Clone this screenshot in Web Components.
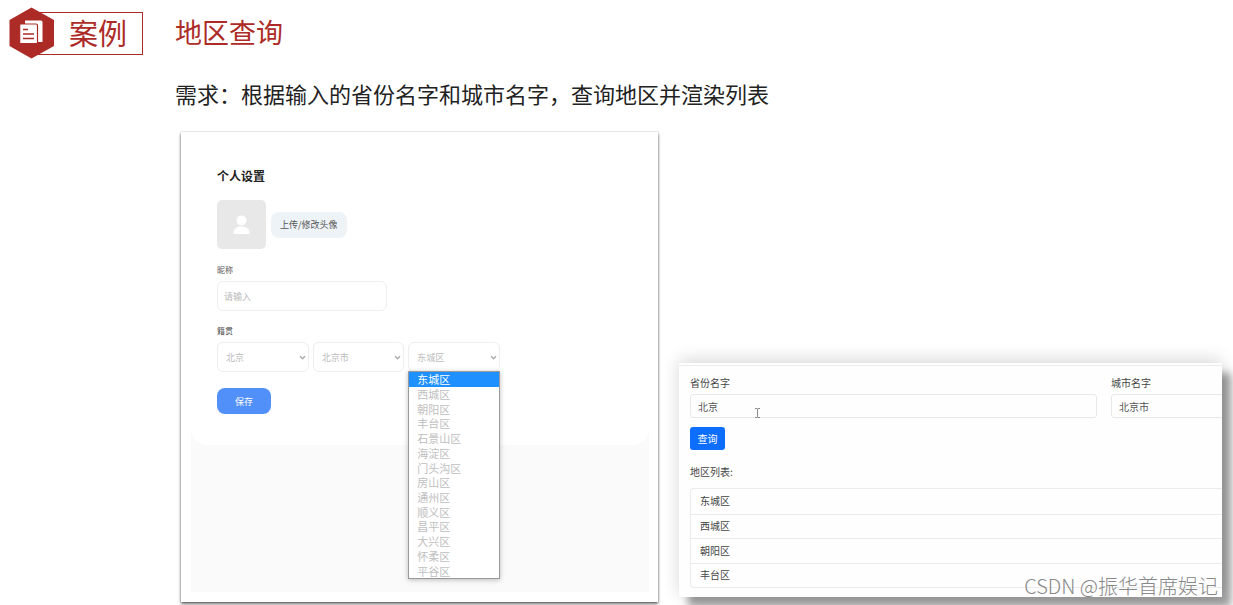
<!DOCTYPE html>
<html lang="zh-CN">
<head>
<meta charset="utf-8">
<title>案例 地区查询</title>
<style>
body{margin:0;background:#fff;color:#222;font-family:"Noto Sans CJK SC",sans-serif}
</style>
</head>
<body>
<case-page></case-page>
<script>
const define=(name,html,setup)=>customElements.define(name,class extends HTMLElement{
  connectedCallback(){
    if(this.shadowRoot)return;
    const t=document.createElement('template');
    t.innerHTML=html;
    this.attachShadow({mode:'open'}).append(t.content.cloneNode(true));
    if(setup)setup(this,this.shadowRoot);
  }
});

define('case-badge',`<style>
:host{display:flex;align-items:center;height:52px}
svg{display:block;width:46px;height:52px;position:relative;flex:none}
span{box-sizing:border-box;flex:1;height:43px;margin-left:-24px;padding-left:37px;border:1px solid #ad2b26;color:#ad2b26;font-size:29px;line-height:39px;white-space:nowrap}
</style>
<svg viewBox="0 0 46 52" aria-hidden="true"><path d="M22.500.500 45 13v26L22.500 51.500.500 39V13z" fill="#ad2b26"/><path d="M16 13.500h16q1.500 0 1.500 1.500v20h-17z" fill="#fff"/><path d="M11.500 17h15.500q1.500 0 1.500 1.500V36.500h-17q-.8 0-.8-.8V17.800q0-.8.8-.8z" fill="#fff" stroke="#ad2b26" stroke-width="1.200"/><path d="M14 22.500h5M14 27h11M14 31.500h11" stroke="#ad2b26" stroke-width="1.300"/></svg>
<span><slot></slot></span>`);

define('page-header',`<style>
:host{display:grid;grid-template-columns:134px 1fr;column-gap:32px;padding:7px 9px 0}
h1{margin:0;color:#ad2b26;font-size:27px;line-height:50px;font-weight:400}
p{grid-column:2;margin:0;padding-top:17px;font-size:22px;line-height:34px}
</style>
<case-badge>案例</case-badge><h1><slot name="title"></slot></h1><p><slot></slot></p>`);

define('text-field',`<style>
:host{display:block;position:relative}
label{display:block;font-size:8px;line-height:12px;color:#555;margin-bottom:5px}
input{display:block;box-sizing:border-box;width:100%;height:30px;padding:0 6px;border:1px solid #eee;border-radius:6px;background:#fff;color:#555;font:9px "Noto Sans CJK SC",sans-serif;outline:0}
input::placeholder{color:#bbb;opacity:1}
:host([compact]) label{font-size:10px;line-height:14px;color:#444;margin-bottom:4px}
:host([compact]) input{height:24px;padding:0 7px;border-color:#e6e8ea;border-radius:3px;font-size:10px;background:#fefefe}
</style><label for="i"></label><input id="i" type="text"><slot></slot>`,(h,r)=>{
  r.querySelector('label').textContent=h.getAttribute('label');
  const i=r.querySelector('input');
  i.value=h.getAttribute('value')||'';
  i.placeholder=h.getAttribute('hint')||'';
});

define('select-field',`<style>
:host{display:block;position:relative;flex:1}
select{appearance:none;display:block;box-sizing:border-box;width:100%;height:30px;margin:0;padding:0 8px;border:1px solid #eee;border-radius:6px;background:#fff;color:#bbb;font:9px "Noto Sans CJK SC",sans-serif;outline:0}
svg{position:absolute;right:3px;top:12px;width:7px;height:7px;pointer-events:none}
</style><select><option></option></select>
<svg viewBox="0 0 7 7" aria-hidden="true"><path d="M1 2.200 3.500 4.800 6 2.200" fill="none" stroke="#aaa" stroke-width="1.300"/></svg><slot></slot>`,(h,r)=>{
  r.querySelector('option').textContent=h.getAttribute('value');
  r.querySelector('select').setAttribute('aria-label',h.getAttribute('label'));
});

define('option-menu',`<style>
:host{position:absolute;z-index:2;top:29px;left:0;right:0}
ul{box-sizing:border-box;height:208px;margin:0;padding:0;list-style:none;display:grid;grid-auto-rows:1fr;background:#fff;border:1px solid #999;box-shadow:0 1px 5px rgba(0,0,0,.25)}
li{min-height:0;display:flex;align-items:center;padding-left:8px;font-size:11px;line-height:14px;color:#c0c0c0}
li[aria-selected=true]{background:#1e90ff;color:#fff}
</style><ul role="listbox" aria-label="地区"></ul>`,(h,r)=>{
  const ul=r.querySelector('ul');
  h.getAttribute('items').split(' ').forEach((x,n)=>{
    const li=document.createElement('li');
    li.setAttribute('role','option');
    li.setAttribute('aria-selected',n===0);
    li.textContent=x;ul.append(li);
  });
});

define('action-button',`<style>
:host{display:block}
button{display:block;box-sizing:border-box;height:26px;padding:0 9px;border:0;border-radius:8px;background:#edf3f7;color:#555;font:9px "Noto Sans CJK SC",sans-serif}
:host([kind=save]) button{width:54px;background:#5290f9;color:#fff}
:host([kind=query]) button{width:35px;height:23px;padding:0;border-radius:3px;background:#0d6efd;color:#fff;font-size:10px}
</style><button type="button"><slot></slot></button>`);

define('user-avatar',`<style>
:host{display:flex;width:49px;height:49px;border-radius:5px;background:#e8e8e8}
svg{width:49px;height:49px}
</style><svg viewBox="0 0 49 49" role="img" aria-label="头像"><circle cx="24.500" cy="20.500" r="4.900" fill="#fff"/><path d="M17 33.500v-1c0-3.500 3-5.500 6-5.500h3c3 0 6 2 6 5.500v1z" fill="#fff" stroke="#fff" stroke-linejoin="round"/></svg>`);

define('profile-panel',`<style>
:host{display:flex;flex-direction:column;box-sizing:border-box;padding:9px 9px 10px 10px;background:#fff;box-shadow:0 2px 3px rgba(0,0,0,.6),0 0 1px rgba(0,0,0,.4)}
section{position:relative;box-sizing:border-box;height:304px;padding:25px 26px 0;background:#fff;border-radius:0 0 16px 16px}
.back{flex:1;background:linear-gradient(#fff 290px,#fafafa 290px)}
h2{margin:0 0 14px;font-size:12px;line-height:20px;font-weight:700}
.row{display:flex;align-items:center;gap:5px;margin-bottom:15px}
text-field{width:170px;margin-bottom:14px}
.label{font-size:8px;line-height:12px;color:#555;margin-bottom:5px}
.selects{display:flex;gap:4px;width:283px;margin-bottom:16px}
</style>
<div class="back"><section>
<h2>个人设置</h2>
<div class="row"><user-avatar></user-avatar><action-button>上传/修改头像</action-button></div>
<text-field label="昵称" hint="请输入"></text-field>
<div class="label">籍贯</div>
<div class="selects">
<select-field label="省份" value="北京"></select-field>
<select-field label="城市" value="北京市"></select-field>
<select-field label="地区" value="东城区"><option-menu items="东城区 西城区 朝阳区 丰台区 石景山区 海淀区 门头沟区 房山区 通州区 顺义区 昌平区 大兴区 怀柔区 平谷区"></option-menu></select-field>
</div>
<action-button kind="save">保存</action-button>
</section></div>`);

define('region-list',`<style>
:host{display:block}
ul{margin:0;padding:0;list-style:none;border:1px solid #ebebeb;border-right:0;border-radius:4px 0 0 4px;display:grid;grid-auto-rows:1fr;height:98px}
li{display:flex;align-items:center;padding-left:9px;font-size:10px;line-height:14px;color:#444}
li+li{border-top:1px solid #ebebeb}
</style><ul></ul>`,(h,r)=>{
  h.getAttribute('items').split(' ').forEach(x=>{
    const li=document.createElement('li');li.textContent=x;r.querySelector('ul').append(li);
  });
});

define('query-panel',`<style>
:host{display:block;position:relative;background:#fefefe;box-shadow:0 -3px 16px rgba(0,0,0,.16),9px 10px 8px rgba(0,0,0,.38)}
.clip{overflow:hidden;box-sizing:border-box;height:234px;padding:2px 0 0}
.clip::before{content:"";display:block;height:1px;background:#ececec}
.content{padding:10px 0 0 11px}
.fields{display:grid;grid-template-columns:76.5% 76.5%;column-gap:14px}
action-button{margin:9px 0 15px}
p{margin:0 0 9px;font-size:10px;line-height:14px;color:#444}
.beam{position:absolute;left:64px;bottom:0;width:7px;height:10px}
.mark{position:absolute;right:4px;bottom:-4px;font-size:20px;line-height:30px;font-weight:300;color:#888;white-space:nowrap;text-shadow:-1px -1px 0 #fff}
</style>
<div class="clip"><div class="content">
<div class="fields">
<text-field compact label="省份名字" value="北京"><svg class="beam" viewBox="0 0 7 10" aria-hidden="true"><path d="M1 .5h2l.5.5.5-.5h2M3.500 1v8M1 9.500h2l.5-.5.5.5h2" fill="none" stroke="#888"/></svg></text-field>
<text-field compact label="城市名字" value="北京市"></text-field>
</div>
<action-button kind="query">查询</action-button>
<p>地区列表:</p>
<region-list items="东城区 西城区 朝阳区 丰台区"></region-list>
</div></div>
<div class="mark">CSDN @振华首席娱记</div>`);

define('case-page',`<style>
:host{display:block;overflow:hidden}
main{display:grid;grid-template-columns:477fr 543fr;column-gap:21px;align-items:end;padding:22px 11px 3px 181px}
profile-panel{height:470px}
query-panel{margin-bottom:5px}
</style>
<page-header><span slot="title">地区查询</span>需求：根据输入的省份名字和城市名字，查询地区并渲染列表</page-header>
<main><profile-panel></profile-panel><query-panel></query-panel></main>`);
</script>
</body>
</html>
